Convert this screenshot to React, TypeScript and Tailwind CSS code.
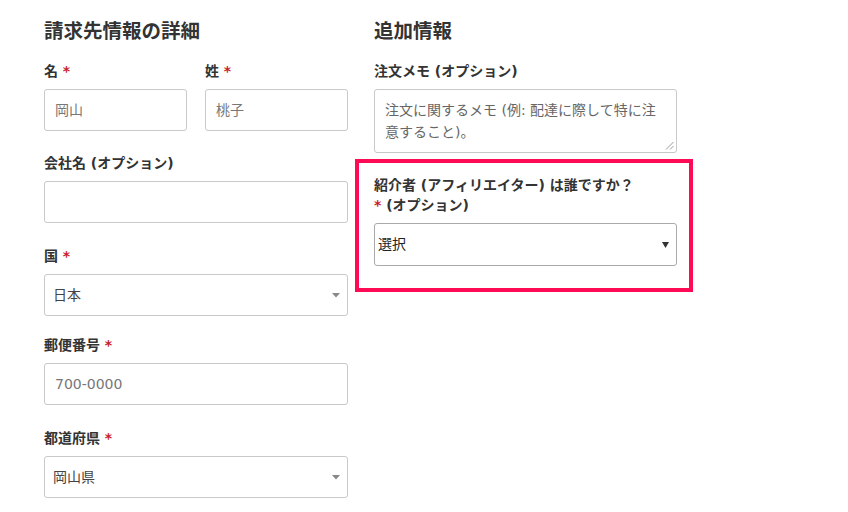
import React from "react";

const Req = () => <span className="text-[#c8202a]"> *</span>;

const Label = ({ children, required }: { children: React.ReactNode; required?: boolean }) => (
  <div className="text-[14px] leading-[20px] font-bold text-[#333] mb-[8px]">
    {children}
    {required && <Req />}
  </div>
);

const TextInput = ({ placeholder }: { placeholder?: string }) => (
  <input
    readOnly
    placeholder={placeholder}
    className="block w-full h-[42px] border border-[#c9c9c9] rounded-[3px] px-[10px] text-[14px] text-[#444] placeholder:text-[#777] bg-white outline-none"
  />
);

const Select2 = ({ value }: { value: string }) => (
  <div className="flex items-center justify-between h-[42px] border border-[#c9c9c9] rounded-[3px] pl-[8px] pr-[6px] text-[14px] text-[#444] bg-white">
    <span>{value}</span>
    <svg width="8" height="5" viewBox="0 0 8 5" className="mr-[1px]">
      <path d="M0 0 L8 0 L4 4.5 Z" fill="#888" />
    </svg>
  </div>
);

const Heading = ({ children }: { children: React.ReactNode }) => (
  <h2 className="text-[19.5px] leading-[27px] font-bold text-[#333]">{children}</h2>
);

export default function App() {
  return (
    <div className="min-h-[512px] bg-white flex pl-[44px] pt-[18px] font-['DejaVu_Sans','Noto_Sans_CJK_JP',sans-serif]">
      {/* billing */}
      <div className="w-[304px] shrink-0">
        <Heading>請求先情報の詳細</Heading>

        <div className="flex gap-[18px] mt-[16px]">
          <div className="w-[143px]">
            <Label required>名</Label>
            <TextInput placeholder="岡山" />
          </div>
          <div className="w-[143px]">
            <Label required>姓</Label>
            <TextInput placeholder="桃子" />
          </div>
        </div>

        <div className="mt-[22px]">
          <Label>会社名 (オプション)</Label>
          <TextInput />
        </div>

        <div className="mt-[23px]">
          <Label required>国</Label>
          <Select2 value="日本" />
        </div>

        <div className="mt-[19px]">
          <Label required>郵便番号</Label>
          <TextInput placeholder="700-0000" />
        </div>

        <div className="mt-[23px]">
          <Label required>都道府県</Label>
          <Select2 value="岡山県" />
        </div>
      </div>

      {/* additional */}
      <div className="w-[303px] shrink-0 ml-[26px]">
        <Heading>追加情報</Heading>

        <div className="mt-[16px]">
          <Label>注文メモ (オプション)</Label>
          <div className="relative h-[64px] border border-[#c9c9c9] rounded-[3px] px-[10px] pt-[9px] text-[14px] leading-[22px] text-[#666] bg-white whitespace-nowrap">
            注文に関するメモ (例: 配達に際して特に注
            <br />
            意すること)。
            <svg width="9" height="9" viewBox="0 0 9 9" className="absolute right-[2px] bottom-[2px]">
              <path d="M8.5 1 L1 8.5 M8.5 5 L5 8.5" stroke="#999" strokeWidth="1" />
            </svg>
          </div>
        </div>

        <div className="mt-[6px] -ml-[19px] w-[338px] border-4 border-[#ff0a54] pl-[15px] pr-[12px] pt-[12px] pb-[22px]">
          <Label>
            紹介者 (アフィリエイター) は誰ですか？
            <br />
            <span className="text-[#c8202a]">*</span> (オプション)
          </Label>
          <div className="flex items-center justify-between h-[43px] border border-[#aaa] rounded-[3px] pl-[3px] pr-[7px] text-[14px] text-[#222] bg-white">
            <span>選択</span>
            <svg width="7" height="6" viewBox="0 0 7 6">
              <path d="M0 0 L7 0 L3.5 6 Z" fill="#333" />
            </svg>
          </div>
        </div>
      </div>
    </div>
  );
}
